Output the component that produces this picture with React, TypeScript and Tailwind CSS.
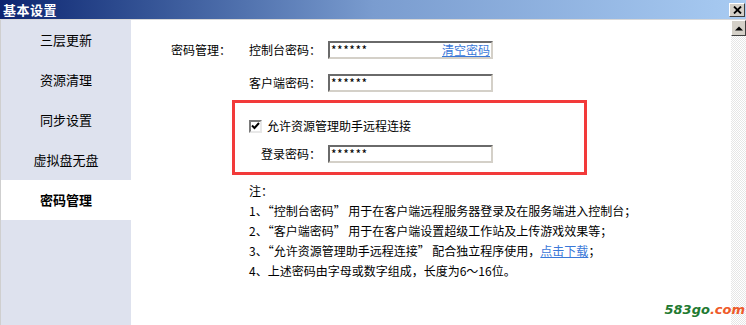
import React from "react";

const font = { fontFamily: '"Noto Sans CJK SC", "Noto Sans", sans-serif' };

function Input({ children }: { children?: React.ReactNode }) {
  return (
    <div className="flex h-[18px] w-[165px] shrink-0 items-center justify-between border-2 border-t-[#6a6a6a] border-l-[#6a6a6a] border-b-[#d4d0c8] border-r-[#d4d0c8] bg-white pl-[1px] pr-[1px] text-[12px] leading-none text-black">
      <span className="tracking-[0.5px]">******</span>
      {children}
    </div>
  );
}

export default function App() {
  const items = ["三层更新", "资源清理", "同步设置", "虚拟盘无盘", "密码管理"];
  return (
    <div className="relative flex h-[325px] w-[746px] flex-col overflow-hidden bg-white text-[12px] text-black" style={font}>
      {/* title bar */}
      <div className="flex h-[19px] items-center justify-between bg-gradient-to-r from-[#0e2470] via-[#7a9ccf] to-[#a8cbf2] pl-[3px] pr-[1px]">
        <span className="text-[13px] font-bold leading-none tracking-[0.5px] text-white">基本设置</span>
        <div className="flex h-[14px] w-[16px] items-center justify-center border border-t-white border-l-white border-b-[#404040] border-r-[#404040] bg-[#d4d0c8]">
          <svg width="9" height="8" viewBox="0 0 9 8">
            <path d="M1 0.5 L8 7.5 M8 0.5 L1 7.5" stroke="#000" strokeWidth="1.8" />
          </svg>
        </div>
      </div>
      <div className="h-px bg-[#d8d8d8]" />
      <div className="flex flex-1">
        {/* sidebar */}
        <div className="flex w-[131px] shrink-0 flex-col border-l border-[#cfcfcf] bg-[#dee2ee]">
          {items.map((t) => (
            <div
              key={t}
              className={
                "flex h-[40px] items-center justify-center whitespace-nowrap text-[13px] " +
                (t === "密码管理" ? "bg-white font-bold" : "")
              }
            >
              {t}
            </div>
          ))}
        </div>
        {/* content */}
        <div className="flex min-w-0 flex-1 flex-col whitespace-nowrap pl-[40px] pt-[21px]">
          <div className="flex items-center">
            <span className="w-[77px] shrink-0 text-[12px]">密码管理：</span>
            <span className="w-[73px] shrink-0 text-right text-[12px]">控制台密码：</span>
            <div className="ml-[7px]">
              <Input>
                <span className="text-[12px] text-[#3a78d8] underline">清空密码</span>
              </Input>
            </div>
          </div>
          <div className="mt-[15px] flex items-center">
            <span className="ml-[77px] w-[73px] shrink-0 text-right text-[12px]">客户端密码：</span>
            <div className="ml-[7px]">
              <Input />
            </div>
          </div>
          <div className="ml-[61px] mt-[8px] flex h-[75px] w-[355px] flex-col border-[3px] border-[#f23a3a] pl-[14px] pt-[15px]">
            <div className="flex h-[16px] items-center">
              <div className="flex h-[13px] w-[13px] items-center justify-center border-2 border-t-[#7a7a7a] border-l-[#7a7a7a] border-b-[#e8e8e8] border-r-[#e8e8e8] bg-white">
                <svg width="9" height="8" viewBox="0 0 9 8">
                  <path d="M1 3.5 L3.5 6 L8 1" stroke="#000" strokeWidth="2" fill="none" />
                </svg>
              </div>
              <span className="ml-[5px] text-[12px]">允许资源管理助手远程连接</span>
            </div>
            <div className="mt-[11px] flex items-center">
              <span className="w-[72px] shrink-0 text-right text-[12px]">登录密码：</span>
              <div className="ml-[7px]">
                <Input />
              </div>
            </div>
          </div>
          <div className="ml-[78px] mt-[6px] flex flex-col text-[12px] leading-[20px]">
            <span>注：</span>
            <span>1、“控制台密码” 用于在客户端远程服务器登录及在服务端进入控制台；</span>
            <span>2、“客户端密码” 用于在客户端设置超级工作站及上传游戏效果等；</span>
            <span>
              3、“允许资源管理助手远程连接” 配合独立程序使用，
              <span className="text-[#3a78d8] underline">点击下载</span>；
            </span>
            <span>4、上述密码由字母或数字组成，长度为6～16位。</span>
          </div>
        </div>
        {/* scrollbar */}
        <div className="flex w-[15px] shrink-0 flex-col">
          <div className="flex h-[16px] items-center justify-center border border-t-white border-l-white border-b-[#404040] border-r-[#404040] bg-[#d4d0c8]">
            <svg width="8" height="5" viewBox="0 0 8 5">
              <path d="M0 4.5 L4 0.5 L8 4.5 Z" fill="#000" />
            </svg>
          </div>
          <div className="flex-1 bg-[repeating-conic-gradient(#e6e6e6_0_25%,#ffffff_0_50%)] bg-[length:2px_2px]" />
        </div>
      </div>
      <div className="absolute bottom-[9px] right-[1px] text-[13px] font-bold italic leading-none" style={{ fontFamily: '"DejaVu Sans", sans-serif' }}>
        <span className="text-[#1f7a32]">583go</span>
        <span className="text-[#ee5a2a]">.com</span>
      </div>
    </div>
  );
}
